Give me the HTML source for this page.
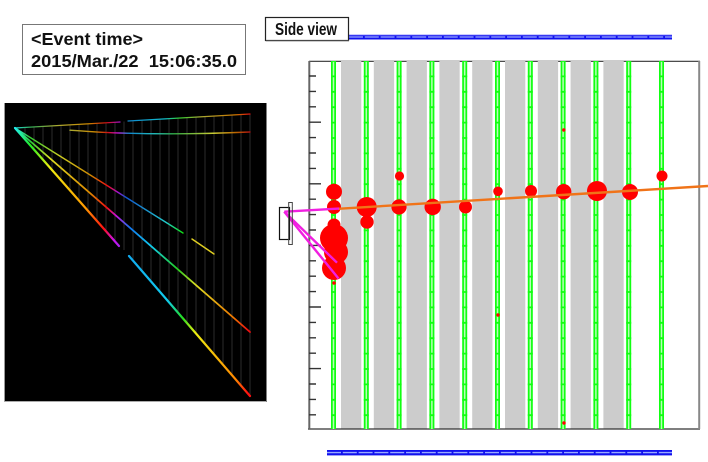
<!DOCTYPE html>
<html>
<head>
<meta charset="utf-8">
<style>
html,body{margin:0;padding:0;background:#fff;width:708px;height:462px;overflow:hidden}
svg{display:block;position:absolute;left:0;top:0;filter:blur(0.3px)}
text{font-family:"Liberation Sans",sans-serif;font-weight:bold;fill:#111}
</style>
</head>
<body>
<svg width="708" height="462" viewBox="0 0 708 462" xmlns="http://www.w3.org/2000/svg">
<defs>
<linearGradient id="t1a" gradientUnits="userSpaceOnUse" x1="15" y1="0" x2="120" y2="0">
<stop offset="0" stop-color="#2dd"/><stop offset=".15" stop-color="#3a5"/><stop offset=".4" stop-color="#aa3"/><stop offset=".7" stop-color="#c80"/><stop offset=".87" stop-color="#c11"/><stop offset="1" stop-color="#a1c"/>
</linearGradient>
<linearGradient id="t1b" gradientUnits="userSpaceOnUse" x1="128" y1="0" x2="250" y2="0">
<stop offset="0" stop-color="#18c"/><stop offset=".3" stop-color="#1bc"/><stop offset=".42" stop-color="#3c3"/><stop offset=".6" stop-color="#aa3"/><stop offset=".88" stop-color="#c70"/><stop offset="1" stop-color="#d11"/>
</linearGradient>
<linearGradient id="t2" gradientUnits="userSpaceOnUse" x1="70" y1="0" x2="250" y2="0">
<stop offset="0" stop-color="#aa3"/><stop offset=".14" stop-color="#c80"/><stop offset=".21" stop-color="#c11"/><stop offset=".26" stop-color="#c1c"/><stop offset=".33" stop-color="#18c"/><stop offset=".47" stop-color="#2bb"/><stop offset=".58" stop-color="#3a4"/><stop offset=".8" stop-color="#cc3"/><stop offset=".92" stop-color="#b60"/><stop offset="1" stop-color="#a11"/>
</linearGradient>
<linearGradient id="t3" gradientUnits="userSpaceOnUse" x1="15" y1="0" x2="183" y2="0">
<stop offset="0" stop-color="#2ee"/><stop offset=".09" stop-color="#3c3"/><stop offset=".27" stop-color="#cc2"/><stop offset=".45" stop-color="#c80"/><stop offset=".55" stop-color="#e11"/><stop offset=".61" stop-color="#a1c"/><stop offset=".66" stop-color="#15c"/><stop offset=".9" stop-color="#2cc"/><stop offset="1" stop-color="#1d1"/>
</linearGradient>
<linearGradient id="t4" gradientUnits="userSpaceOnUse" x1="15" y1="0" x2="250" y2="0">
<stop offset="0" stop-color="#2ee"/><stop offset=".07" stop-color="#3c3"/><stop offset=".15" stop-color="#dd2"/><stop offset=".32" stop-color="#d80"/><stop offset=".39" stop-color="#e11"/><stop offset=".43" stop-color="#c1d"/><stop offset=".49" stop-color="#17e"/><stop offset=".58" stop-color="#1ce"/><stop offset=".69" stop-color="#2c2"/><stop offset=".77" stop-color="#dd2"/><stop offset=".93" stop-color="#e70"/><stop offset=".99" stop-color="#e11"/>
</linearGradient>
<linearGradient id="t5a" gradientUnits="userSpaceOnUse" x1="15" y1="0" x2="119" y2="0">
<stop offset="0" stop-color="#2ee"/><stop offset=".15" stop-color="#2e2"/><stop offset=".33" stop-color="#ee1"/><stop offset=".68" stop-color="#f90"/><stop offset=".85" stop-color="#f11"/><stop offset=".95" stop-color="#c1e"/><stop offset="1" stop-color="#a2e"/>
</linearGradient>
<linearGradient id="t5b" gradientUnits="userSpaceOnUse" x1="129" y1="0" x2="250" y2="0">
<stop offset="0" stop-color="#1ae"/><stop offset=".32" stop-color="#1ce"/><stop offset=".44" stop-color="#2d2"/><stop offset=".55" stop-color="#ee1"/><stop offset=".88" stop-color="#f80"/><stop offset=".98" stop-color="#f11"/>
</linearGradient>
<g id="col">
<line x1="0" y1="61" x2="0" y2="429" stroke="#1f1" stroke-width="5"/>
<line x1="0" y1="61" x2="0" y2="429" stroke="#b8ffb8" stroke-width="1.5"/>
<line x1="0" y1="61" x2="0" y2="429" stroke="#1f1" stroke-width="5" stroke-dasharray="1.8 13.6" stroke-dashoffset="0.9"/>
</g>
</defs>

<!-- Event time box -->
<rect x="22.5" y="24.5" width="223" height="50" fill="#fff" stroke="#777" stroke-width="1"/>
<text x="31" y="45" font-size="17.2" textLength="112" lengthAdjust="spacingAndGlyphs">&lt;Event time&gt;</text>
<text x="31" y="67" font-size="17.2" textLength="206" lengthAdjust="spacingAndGlyphs" xml:space="preserve">2015/Mar./22  15:06:35.0</text>

<!-- Left black panel -->
<rect x="4.5" y="103" width="262" height="299" fill="#000"/>
<line x1="4.5" y1="103" x2="4.5" y2="402" stroke="#999" stroke-width="1"/>
<line x1="4" y1="401.5" x2="266" y2="401.5" stroke="#aaa" stroke-width="1"/>
<path fill="none" stroke="#2c2c2c" stroke-width="1" d="M25 127.4V139.4M34 126.9V149.6M43 126.4V159.8M52 125.9V170M61 125.4V180.2M70 124.9V190.5M79 124.3V200.7M88 123.8V210.9M97 123.3V221.1M106 122.8V231.3M115 122.3V241.5M124 121.5V250M133 120.7V260.6M142 120.2V271M151 119.7V281.5M160 119.2V291.9M169 118.6V302.3M178 118.1V312.7M187 117.6V323.1M196 117.1V333.5M205 116.6V344M214 116.1V354.3M223 115.5V364.8M232 115V375.2M241 114.5V385.6M250 114V396"/>
<g fill="none" stroke-linecap="round">
<line x1="15" y1="128" x2="120" y2="122.01" stroke="url(#t1a)" stroke-width="1.3"/>
<line x1="128" y1="121" x2="250" y2="114.01" stroke="url(#t1b)" stroke-width="1.3"/>
<path d="M70 130.2Q110 133 120 133Q180 135 250 132" stroke="url(#t2)" stroke-width="1.4"/>
<line x1="15" y1="128" x2="183" y2="233" stroke="url(#t3)" stroke-width="1.4"/>
<line x1="192" y1="239" x2="214" y2="254" stroke="#dc2" stroke-width="1.5"/>
<line x1="15" y1="128" x2="250" y2="332" stroke="url(#t4)" stroke-width="1.8"/>
<line x1="15" y1="128" x2="119" y2="246" stroke="url(#t5a)" stroke-width="2.2"/>
<line x1="129" y1="256" x2="250" y2="396" stroke="url(#t5b)" stroke-width="2.2"/>
</g>

<!-- Right panel -->
<g fill="#ccc">
<rect x="341" y="60" width="20.3" height="369"/>
<rect x="373.8" y="60" width="20.3" height="369"/>
<rect x="406.6" y="60" width="20.3" height="369"/>
<rect x="439.4" y="60" width="20.3" height="369"/>
<rect x="472.2" y="60" width="20.3" height="369"/>
<rect x="505" y="60" width="20.3" height="369"/>
<rect x="537.8" y="60" width="20.3" height="369"/>
<rect x="570.6" y="60" width="20.3" height="369"/>
<rect x="603.4" y="60" width="20.3" height="369"/>
</g>
<path fill="none" stroke="#333" stroke-width="1.2" d="M309 61.3H341M361.3 61.3H373.8M394.1 61.3H406.6M426.9 61.3H439.4M459.7 61.3H472.2M492.5 61.3H505M525.3 61.3H537.8M558.1 61.3H570.6M590.9 61.3H603.4M623.7 61.3H700"/>
<line x1="308" y1="429" x2="700" y2="429" stroke="#333" stroke-width="1.2"/>
<line x1="309.3" y1="61" x2="309.3" y2="429" stroke="#666" stroke-width="2"/>
<line x1="699.2" y1="61" x2="699.2" y2="429" stroke="#888" stroke-width="2"/>
<path fill="none" stroke="#333" stroke-width="1.4" d="M309 76H316M309 91.4H316M309 106.8H316M309 122.2H321M309 137.6H316M309 153H316M309 168.4H316M309 183.8H321M309 199.2H316M309 214.6H316M309 230H316M309 245.4H321M309 260.8H316M309 276.2H316M309 291.6H316M309 307H321M309 322.4H316M309 337.8H316M309 353.2H316M309 368.6H321M309 384H316M309 399.4H316M309 414.8H316"/>

<use href="#col" x="333.5"/>
<use href="#col" x="366.3"/>
<use href="#col" x="399.1"/>
<use href="#col" x="431.9"/>
<use href="#col" x="464.7"/>
<use href="#col" x="497.5"/>
<use href="#col" x="530.3"/>
<use href="#col" x="563.1"/>
<use href="#col" x="595.9"/>
<use href="#col" x="628.7"/>
<use href="#col" x="661.5"/>

<!-- Top / bottom blue bars -->
<rect x="349" y="34.5" width="323" height="5" fill="#11e"/>
<line x1="349" y1="34.8" x2="672" y2="34.8" stroke="#aaf" stroke-width="0.8"/>
<line x1="349" y1="37" x2="672" y2="37" stroke="#9af" stroke-width="1.2" stroke-dasharray="14 1.8"/>
<rect x="327" y="450" width="345" height="5.4" fill="#11e"/>
<line x1="327" y1="452.6" x2="672" y2="452.6" stroke="#9af" stroke-width="1.4" stroke-dasharray="14 1.8"/>

<!-- Side view label -->
<rect x="265.5" y="17.5" width="83" height="23" fill="#fff" stroke="#222" stroke-width="1.2"/>
<line x1="266" y1="41.3" x2="349" y2="41.3" stroke="#bbb" stroke-width="1"/>
<text x="275" y="35" font-size="17.5" textLength="62" lengthAdjust="spacingAndGlyphs">Side view</text>

<!-- Red hits -->
<g fill="#f00">
<circle cx="334" cy="191.7" r="8"/>
<circle cx="334" cy="207" r="7"/>
<circle cx="366.7" cy="207" r="10"/>
<circle cx="367" cy="222" r="6.7"/>
<circle cx="399" cy="207" r="7.6"/>
<circle cx="399.5" cy="176" r="4.6"/>
<circle cx="432.7" cy="207" r="8.2"/>
<circle cx="465.5" cy="207" r="6.5"/>
<circle cx="498" cy="191.3" r="4.8"/>
<circle cx="531" cy="191" r="6"/>
<circle cx="563.7" cy="191.7" r="7.7"/>
<circle cx="597" cy="191" r="10"/>
<circle cx="630" cy="192" r="8"/>
<circle cx="662" cy="176" r="5.5"/>
<circle cx="334" cy="225" r="6.5"/>
<circle cx="334" cy="238" r="14"/>
<circle cx="336" cy="252" r="12"/>
<circle cx="334" cy="268" r="12"/>
<circle cx="334" cy="283" r="1.8"/>
<circle cx="563.8" cy="130" r="1.7"/>
<circle cx="498" cy="315" r="1.7"/>
<circle cx="564" cy="423" r="1.7"/>
</g>

<!-- Beam / tracks -->
<line x1="338" y1="208.8" x2="708" y2="186" stroke="#f07318" stroke-width="2.4"/>
<g stroke="#f01fe0" stroke-width="2.4" fill="none">
<line x1="284.3" y1="211.7" x2="339" y2="208.6"/>
<line x1="284.3" y1="211.7" x2="337" y2="262.7"/>
<line x1="284.3" y1="211.7" x2="338.5" y2="278.5"/>
</g>
<rect x="279.5" y="207.5" width="10" height="32" fill="none" stroke="#111" stroke-width="1.2"/>
<rect x="288.7" y="202.5" width="3.6" height="42" fill="none" stroke="#444" stroke-width="1"/>
</svg>
</body>
</html>
